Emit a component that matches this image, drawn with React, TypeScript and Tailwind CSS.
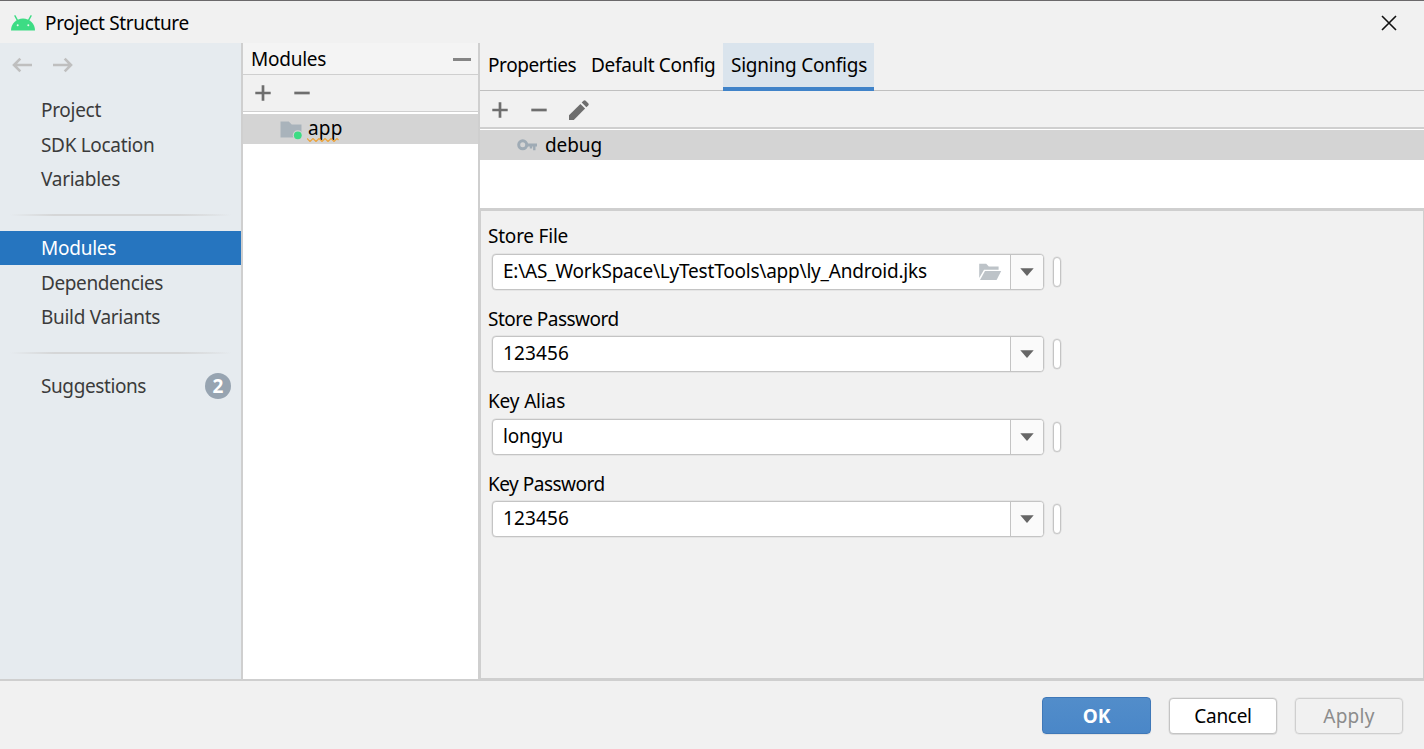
import React from 'react';

function AndroidIcon() {
  return (
    <svg width="24" height="16" viewBox="0 0 24 16" className="shrink-0">
      <path d="M0 15.5a12 12 0 0 1 24 0z" fill="#3ddc84" />
      <path d="M4 .8 6.600 5.600M20 .8 17.400 5.600" stroke="#3ddc84" strokeWidth="1.400" strokeLinecap="round" />
      <circle cx="6.700" cy="10.200" r="1" fill="#e8f8ef" />
      <circle cx="17.300" cy="10.200" r="1" fill="#e8f8ef" />
    </svg>
  );
}

function ArrowIcon({ right = false }: { right?: boolean }) {
  return (
    <svg width="20" height="16" viewBox="0 0 20 16" className={right ? 'rotate-180' : ''}>
      <path d="M8.300 1.700 2 8l6.300 6.300M2.400 8H20" fill="none" stroke="#bfbfbf" strokeWidth="2.600" />
    </svg>
  );
}

function PlusIcon() {
  return (
    <svg width="16" height="16" viewBox="0 0 16 16">
      <path d="M8 .3v15.400M.3 8h15.400" stroke="#6e6e6e" strokeWidth="2.700" />
    </svg>
  );
}

function MinusIcon() {
  return (
    <svg width="16" height="16" viewBox="0 0 16 16">
      <path d="M.3 8h15.400" stroke="#6e6e6e" strokeWidth="2.700" />
    </svg>
  );
}

function PencilIcon() {
  return (
    <svg width="20" height="20" viewBox="0 0 20 20">
      <path d="M0 20v-4.800L11.400 3.900l4.700 4.700L4.800 20z" fill="#6e6e6e" />
      <path d="m12.700 2.600 1.800-1.800a1.600 1.600 0 0 1 2.200 0l2.500 2.500a1.600 1.600 0 0 1 0 2.200l-1.800 1.800z" fill="#6e6e6e" />
    </svg>
  );
}

function ModuleIcon() {
  return (
    <svg width="23" height="20" viewBox="0 0 23 20" className="mt-px">
      <path d="M.5 1.500h8.200l3 3h9.800V17.500H.5z" fill="#a9b3bb" />
      <circle cx="17.800" cy="15.300" r="5" fill="#d4d4d4" />
      <circle cx="17.800" cy="15.300" r="3.900" fill="#3ddc84" />
    </svg>
  );
}

function KeyIcon() {
  return (
    <svg width="20" height="12" viewBox="0 0 20 12">
      <circle cx="5.700" cy="5.800" r="4" fill="none" stroke="#9fabb5" strokeWidth="3" />
      <path d="M9.500 6H20" stroke="#9fabb5" strokeWidth="3" />
      <path d="M17.300 6v5.200M14 6v3.600" stroke="#9fabb5" strokeWidth="2.400" />
    </svg>
  );
}

function FolderIcon() {
  return (
    <svg width="23" height="18" viewBox="0 0 23 18">
      <path d="M.2.700h7l2.600 2.700h9.800v3.400H5L.2 15z" fill="#bdc3c8" />
      <path d="M6 8.100h16.200L17.600 17H1z" fill="#bdc3c8" />
    </svg>
  );
}

function SideItem({ label, tracking, selected = false, badge }: { label: string; tracking: string; selected?: boolean; badge?: string }) {
  return (
    <div className={`flex h-[34px] items-center justify-between pr-[10px] pl-[41px] ${selected ? 'bg-[#2675bf] text-white' : 'text-[#3b3b3b]'}`}>
      <span className={tracking}>{label}</span>
      {badge && (
        <span className="flex size-[26px] items-center justify-center rounded-full bg-[#97a4b1] font-bold text-white">{badge}</span>
      )}
    </div>
  );
}

function Separator() {
  return <div className="mx-[10px] h-[2px] bg-linear-to-r from-transparent via-[#d5d6d7] via-20% to-transparent"><div className="ml-[20%] h-full bg-linear-to-r from-[#d5d6d7] from-70% to-transparent" /></div>;
}

function Field({ label, labelTracking, value, valueTracking, browse = false }: { label: string; labelTracking: string; value: string; valueTracking: string; browse?: boolean }) {
  return (
    <div className="h-[82.500px]">
      <div className={`pl-[7px] ${labelTracking}`}>{label}</div>
      <div className="mt-[4.500px] flex items-center pl-[11px]">
        <div className="flex h-[36px] w-[552px] overflow-hidden rounded-[4px] border border-[#c4c4c4] bg-white shadow-[0_0_0_0.5px_#c4c4c480]">
          <div className="flex grow items-center justify-between pr-[8px] pl-[10px]">
            <span className={`-mt-[2px] ${valueTracking}`}>{value}</span>
            {browse && <FolderIcon />}
          </div>
          <div className="flex w-[33px] items-center justify-center border-l border-[#c4c4c4] bg-[#fafafa]">
            <svg width="14" height="8" viewBox="0 0 14 8" className="-ml-px">
              <path d="M.3.200h13.400L7 8z" fill="#666" />
            </svg>
          </div>
        </div>
        <div className="ml-[9px] h-[30px] w-[8px] rounded-[4px] border border-[#c4c4c4] bg-white shadow-[0_0_0_0.5px_#c4c4c480]" />
      </div>
    </div>
  );
}

export default function App() {
  return (
    <div className="flex h-[749px] w-[1424px] flex-col overflow-hidden border-t border-[#6b696b] bg-[#f1f1f1] font-['Noto_Sans',sans-serif] text-[19px] leading-[26px] whitespace-nowrap text-black">
      <header className="flex h-[42px] items-center justify-between pt-[2px] pr-[27px] pl-[11px]">
        <div className="flex items-center gap-[10px]">
          <AndroidIcon />
          <h1 className="tracking-[-0.35px]">Project Structure</h1>
        </div>
        <svg width="16" height="16" viewBox="0 0 16 16">
          <path d="m1 1 14 14M15 1 1 15" stroke="#111" strokeWidth="1.600" />
        </svg>
      </header>

      <div className="flex h-[636px] shrink-0">
        <nav className="flex w-[243px] shrink-0 flex-col border-r-2 border-[#cfcfcf] bg-[#e6ebef]">
          <div className="flex gap-[21px] pt-[14px] pb-[20px] pl-[12px]">
            <ArrowIcon />
            <ArrowIcon right />
          </div>
          <SideItem label="Project" tracking="tracking-[-0.3px]" />
          <div className="h-px" />
          <SideItem label="SDK Location" tracking="tracking-[-0.32px]" />
          <SideItem label="Variables" tracking="tracking-[-0.27px]" />
          <div className="flex h-[35px] flex-col justify-center pt-[2px]"><Separator /></div>
          <SideItem label="Modules" tracking="tracking-[-0.25px]" selected />
          <div className="h-px" />
          <SideItem label="Dependencies" tracking="tracking-[-0.4px]" />
          <SideItem label="Build Variants" tracking="tracking-[-0.3px]" />
          <div className="flex h-[35px] flex-col justify-center pt-[2px]"><Separator /></div>
          <SideItem label="Suggestions" tracking="tracking-[-0.4px]" badge="2" />
        </nav>

        <section className="flex w-[237px] shrink-0 flex-col border-r-2 border-[#cfcfcf] bg-white">
          <div className="flex h-[32px] items-center justify-between border-b border-[#cfcfcf] bg-[#f4f4f4] pr-[7px] pl-[8px]">
            <h2 className="tracking-[-0.25px]">Modules</h2>
            <div className="mt-px h-[3px] w-[18px] bg-[#858585]" />
          </div>
          <div className="flex h-[37px] items-center gap-[23px] border-b border-[#cfcfcf] bg-[#f1f1f1] pl-[12px]">
            <PlusIcon />
            <MinusIcon />
          </div>
          <div className="mt-[2px] flex h-[30px] items-center gap-[5px] bg-[#d4d4d4] pl-[37px]">
            <ModuleIcon />
            <span className="relative -mt-[2px] tracking-[0.2px]">
              app
              <svg width="34" height="4" viewBox="0 0 34 4" className="absolute top-[23px] -left-px">
                <path d="m0 .5 3 3 3-3 3 3 3-3 3 3 3-3 3 3 3-3 3 3 3-3 1.500 1.500" fill="none" stroke="#eda339" strokeWidth="1.200" />
              </svg>
            </span>
          </div>
        </section>

        <main className="flex min-w-0 grow flex-col">
          <div className="flex h-[48px] shrink-0 border-b border-[#c0c0c0]">
            <div className="w-[103px] pt-[9px] pl-[8px] tracking-[-0.4px]">Properties</div>
            <div className="w-[140px] pt-[9px] pl-[8px] tracking-[-0.3px]">Default Config</div>
            <div className="h-[48px] w-[151px] border-b-4 border-[#4083c9] bg-[#dae4ed] pt-[9px] pl-[8px] tracking-[-0.23px]">Signing Configs</div>
          </div>
          <div className="flex h-[38px] shrink-0 items-center border-b-2 border-[#cfcfcf] pt-px pl-[12px]">
            <PlusIcon />
            <span className="w-[23px]" />
            <MinusIcon />
            <span className="w-[22px]" />
            <PencilIcon />
          </div>
          <div className="h-[79px] shrink-0 bg-white pt-px">
            <div className="flex h-[30px] items-center gap-[8px] bg-[#d4d4d4] pl-[37px]">
              <KeyIcon />
              <span className="tracking-[-0.1px]">debug</span>
            </div>
          </div>
          <div className="grow border-x border-t-[3px] border-b border-[#cfcfcf] pt-[12px]">
            <Field label="Store File" labelTracking="tracking-[-0.22px]" value={'E:\\AS_WorkSpace\\LyTestTools\\app\\ly_Android.jks'} valueTracking="tracking-[-0.21px]" browse />
            <Field label="Store Password" labelTracking="tracking-[-0.52px]" value="123456" valueTracking="tracking-[0.15px]" />
            <Field label="Key Alias" labelTracking="tracking-[-0.15px]" value="longyu" valueTracking="tracking-[-0.2px]" />
            <Field label="Key Password" labelTracking="tracking-[-0.5px]" value="123456" valueTracking="tracking-[0.15px]" />
          </div>
        </main>
      </div>

      <footer className="flex grow items-center justify-end gap-[18px] border-t-2 border-[#cfcfcf] pr-[21px] pt-[2px]">
        <button className="-mt-px h-[37px] w-[109px] rounded-[4px] border border-[#3f78b8] bg-linear-to-b from-[#528dca] to-[#4a87c8] font-bold text-white shadow-[0_1px_1px_#0001] pt-px">OK</button>
        <button className="h-[36px] w-[108px] rounded-[4px] border border-[#c4c4c4] bg-white tracking-[-0.3px] shadow-[0_0_0_0.5px_#c4c4c480,0_1px_1px_#0001]">Cancel</button>
        <button className="h-[36px] w-[108px] rounded-[4px] border border-[#cfcfcf] tracking-[0.3px] text-[#8c8c8c] shadow-[0_0_0_0.5px_#cfcfcf80]">Apply</button>
      </footer>
    </div>
  );
}
